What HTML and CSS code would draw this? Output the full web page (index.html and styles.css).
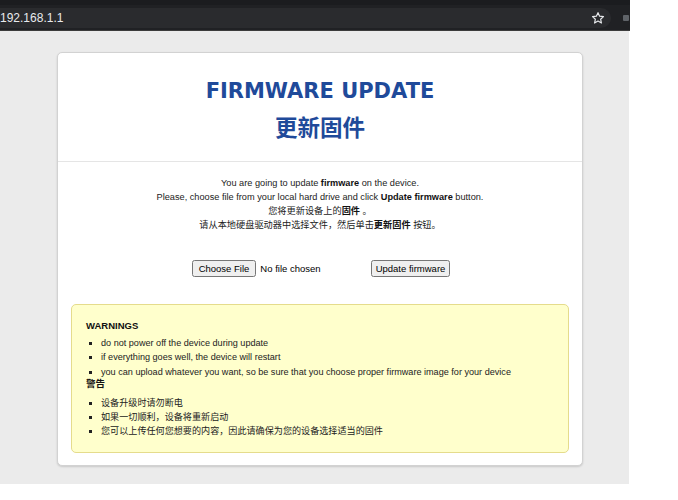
FILE: index.html
```html
<!DOCTYPE html>
<html>
<head>
<meta charset="utf-8">
<title>Firmware update</title>
<link rel="stylesheet" href="styles.css">
</head>
<body>
<div class="chrome">
    <div class="tabstrip"></div>
    <div class="toolbar">
        <div class="omnibox">
            <span class="url">192.168.1.1</span>
            <svg class="star" width="14" height="14" viewBox="0 0 24 24"><path d="M12 2.8l2.8 6.1 6.6.7-4.9 4.5 1.4 6.5L12 17.3l-5.9 3.3 1.4-6.5-4.9-4.5 6.6-.7z" fill="none" stroke="#e8eaed" stroke-width="2" stroke-linejoin="round"/></svg>
        </div>
        <div class="ext"></div>
    </div>
</div>
<div class="view">
    <div class="page">
        <div class="card">
            <div class="card-head">
                <h1 class="title">FIRMWARE UPDATE</h1>
                <h1 class="title title-cn">更新固件</h1>
            </div>
            <div class="card-body">
                <p class="intro">
                    You are going to update <b>firmware</b> on the device.<br>
                    Please, choose file from your local hard drive and click <b>Update firmware</b> button.<br>
                    您将更新设备上的<b>固件</b> 。<br>
                    请从本地硬盘驱动器中选择文件，然后单击<b>更新固件</b> 按钮。
                </p>
                <form class="upload">
                    <input type="file" class="file">
                    <button type="button" class="btn">Update firmware</button>
                </form>
                <div class="warn">
                    <b>WARNINGS</b>
                    <ul>
                        <li>do not power off the device during update</li>
                        <li>if everything goes well, the device will restart</li>
                        <li>you can upload whatever you want, so be sure that you choose proper firmware image for your device</li>
                    </ul>
                    <b class="cn-head">警告</b>
                    <ul>
                        <li>设备升级时请勿断电</li>
                        <li>如果一切顺利，设备将重新启动</li>
                        <li>您可以上传任何您想要的内容，因此请确保为您的设备选择适当的固件</li>
                    </ul>
                </div>
            </div>
        </div>
    </div>
</div>
</body>
</html>
```

FILE: styles.css
```css
*{padding:0;margin:0;box-sizing:border-box;}
body{background:#fff;font-family:"Liberation Sans",Arial,"Noto Sans CJK SC",sans-serif;}

.chrome{width:630px;height:31px;background:#202124;border-bottom:1px solid #3c3c3c;}
.tabstrip{height:5px;background:#1b1c1f;}
.toolbar{display:flex;align-items:center;height:25px;}
.omnibox{
    display:flex;
    align-items:center;
    justify-content:space-between;
    width:611px;
    height:20px;
    background:#2a2b2e;
    border-radius:0 10px 10px 0;
    padding:0 6px 0 0;
}
.url{color:#e8eaed;font-size:12px;}
.ext{width:6px;height:6px;margin-left:12px;background:#5f6368;border-radius:1px;}

.view{display:flex;}
.page{width:629px;height:453px;background:#ebebeb;padding:21px 0 0 57px;}

.card{
    width:526px;
    height:414px;
    background:#fff;
    border:1px solid #d2d2d2;
    border-radius:5px;
    box-shadow:0 1px 2px rgba(0,0,0,0.15);
}
.card-head{height:109px;border-bottom:1px solid #e5e5e5;padding-top:25px;text-align:center;}
.title{
    font-family:"DejaVu Sans",Verdana,"Noto Sans CJK SC",sans-serif;
    font-size:21px;
    font-weight:bold;
    color:#1f4a9a;
    line-height:26px;
}
.title-cn{font-family:"Noto Sans CJK SC",sans-serif;font-size:22.5px;line-height:36px;margin-top:4px;}

.card-body{padding:14px 13px 0 13px;}
.intro{text-align:center;font-size:9.2px;line-height:14px;color:#222;}
.intro b{color:#111;}

.upload{display:flex;justify-content:center;align-items:center;gap:47px;margin-top:28px;font-size:9.5px;padding-left:2px;}
.file{font-size:9.5px;font-family:"Liberation Sans",Arial,sans-serif;width:132px;}
.file::file-selector-button{font-size:9.5px;padding:1px 5px;margin-right:4px;}
.btn{font-size:9.5px;font-family:"Liberation Sans",Arial,sans-serif;padding:1px 3px;}

.warn{
    margin-top:27px;
    height:149px;
    background:#ffffcc;
    border:1px solid #e5dc8c;
    border-radius:5px;
    padding:14px 14px;
    font-size:9.1px;
    line-height:14.5px;
    color:#222;
}
.warn b{font-size:9.5px;color:#111;display:block;}
.warn b + ul{margin-top:2px;}
.warn ul{list-style:square;padding-left:15px;}
.warn .cn-head{margin-top:-2px;}
.warn ul:last-child{margin-top:4px;line-height:14px;}
```
